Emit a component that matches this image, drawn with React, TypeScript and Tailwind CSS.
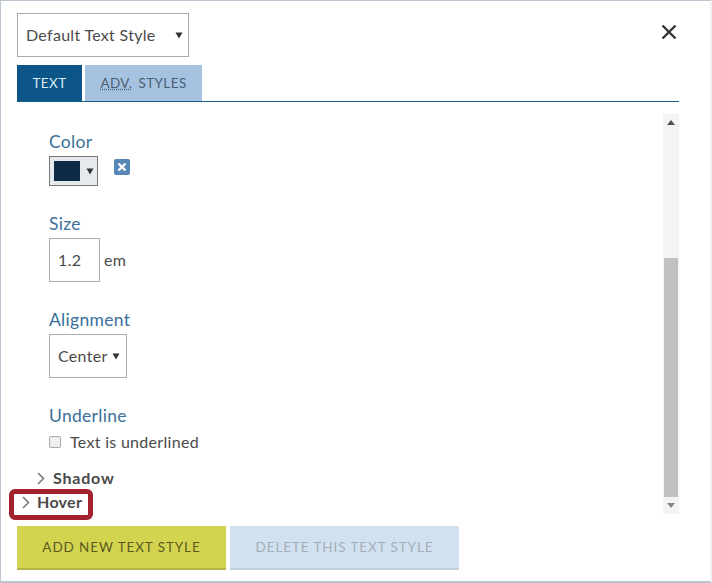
import React from "react";

const font = "font-['Lato','Noto_Sans',sans-serif]";

function Caret({ className }: { className?: string }): React.ReactElement {
  return (
    <svg width="8" height="7" viewBox="0 0 8 7" className={className}>
      <path d="M0.5 0.5H7.5L4 6.5Z" fill="#333" />
    </svg>
  );
}

function Chevron(): React.ReactElement {
  return (
    <svg width="8" height="13" viewBox="0 0 8 13" className="shrink-0">
      <path d="M1 1L6.5 6.5L1 12" fill="none" stroke="#777" strokeWidth="1.5" />
    </svg>
  );
}

function Label({ text }: { text: string }): React.ReactElement {
  return <div className="text-[17.5px] leading-[24px] text-[#3a7099] tracking-[0.3px]">{text}</div>;
}

export default function App(): React.ReactElement {
  return (
    <div className={`${font} w-[712px] h-[583px] bg-white border-t border-l border-b-2 border-r-2 border-[#b9c6d2] border-r-[#f1f3f5] text-[#4a4a4a] flex flex-col overflow-hidden`}>
      {/* Header */}
      <div className="flex items-start justify-between pl-4 pr-[33px] pt-3">
        <div className="w-[172px] h-[44px] border border-[#a3adb8] flex items-center justify-between pl-2 pr-[5px] text-[16px] tracking-[0.3px]">
          <span>Default Text Style</span>
          <Caret />
        </div>
        <svg width="16" height="16" viewBox="0 0 16 16" className="mt-[11px]">
          <path d="M1.5 1.5L14.5 14.5M14.5 1.5L1.5 14.5" stroke="#333" strokeWidth="2.4" />
        </svg>
      </div>

      {/* Tabs */}
      <div className="ml-4 mr-[31px] mt-2 h-[37px] flex gap-[3px] border-b border-[#1a5c85] text-[13.5px] tracking-[0.4px]">
        <div className="w-[65px] h-[36px] bg-[#0b5589] text-[#d9ecf7] flex items-center justify-center">TEXT</div>
        <div className="w-[117px] h-[36px] bg-[#a5c3e1] text-[#4b5f73] flex items-center justify-center gap-[6px]">
          <span className="underline decoration-dotted">ADV.</span>
          <span>STYLES</span>
        </div>
      </div>

      {/* Scroll area */}
      <div className="ml-4 mr-[31px] mt-3 h-[400px] flex">
        <div className="relative flex-1 min-w-0">
          <div className="pl-8 pt-[16px]">
            <Label text="Color" />
            <div className="flex items-start gap-4 mt-[2px]">
              <div className="w-[49px] h-[30px] border border-[#777] bg-[#e6e9ed] flex items-center pl-1 gap-[6px]">
                <div className="w-[26px] h-[20px] bg-[#0e2a47]" />
                <Caret />
              </div>
              <div className="w-4 h-4 mt-[3px] rounded-[2px] bg-[#5686b5] flex items-center justify-center">
                <svg width="10" height="10" viewBox="0 0 10 10">
                  <path d="M1.5 1.5L8.5 8.5M8.5 1.5L1.5 8.5" stroke="#fff" strokeWidth="2.4" />
                </svg>
              </div>
            </div>

            <div className="mt-[26px]"><Label text="Size" /></div>
            <div className="flex items-center gap-1 mt-[2px] text-[16px] tracking-[0.4px]">
              <div className="w-[51px] h-[44px] border border-[#a3adb8] flex items-center pl-2">1.2</div>
              <span>em</span>
            </div>

            <div className="mt-[26px]"><Label text="Alignment" /></div>
            <div className="w-[78px] h-[44px] mt-[2px] border border-[#a3adb8] flex items-center justify-between pl-2 pr-[6px] text-[16px] tracking-[0.3px]">
              <span>Center</span>
              <Caret />
            </div>

            <div className="mt-[26px]"><Label text="Underline" /></div>
            <div className="flex items-center gap-[9px] mt-[2px] text-[16px] tracking-[0.3px]">
              <input type="checkbox" className="appearance-none w-3 h-3 bg-[#efefef] border border-[#a8a8a8] rounded-[2px]" />
              <span>Text is underlined</span>
            </div>
          </div>

          <div className="flex items-center gap-[8px] pl-[20px] mt-[12px] h-[24px] text-[16px] font-bold tracking-[0.8px]">
            <Chevron />
            <span>Shadow</span>
          </div>
          <div className="flex items-center gap-[7px] pl-[5px] h-[24px] text-[16px] font-bold tracking-[0.3px]">
            <Chevron />
            <span>Hover</span>
          </div>
          {/* Callout round the Hover row */}
          <div className="absolute left-[-8px] top-[375px] w-[84px] h-[31px] rounded-[6px] border-[5px] border-[#a3222f]" />
        </div>

        {/* Scrollbar */}
        <div className="w-4 h-full bg-[#f4f4f4] flex flex-col items-center">
          <div className="h-[16px] flex items-center justify-center">
            <svg width="8" height="5" viewBox="0 0 8 5"><path d="M0 5H8L4 0Z" fill="#505050" /></svg>
          </div>
          <div className="h-[128px] w-full" />
          <div className="h-[239px] w-[14px] bg-[#c1c1c1]" />
          <div className="h-[17px] flex items-center justify-center">
            <svg width="8" height="5" viewBox="0 0 8 5"><path d="M0 0H8L4 5Z" fill="#858585" /></svg>
          </div>
        </div>
      </div>

      {/* Footer buttons */}
      <div className="ml-4 mt-3 flex gap-1 text-[13.5px] tracking-[0.9px]">
        <div className="w-[209px] h-[44px] bg-[#d2d450] border-b-2 border-[#b4b548] text-[#5a5a1e] flex items-center justify-center">ADD NEW TEXT STYLE</div>
        <div className="w-[229px] h-[44px] bg-[#d2e1f0] border-b-2 border-[#c2d0dc] text-[#a3aeb8] flex items-center justify-center">DELETE THIS TEXT STYLE</div>
      </div>
    </div>
  );
}
